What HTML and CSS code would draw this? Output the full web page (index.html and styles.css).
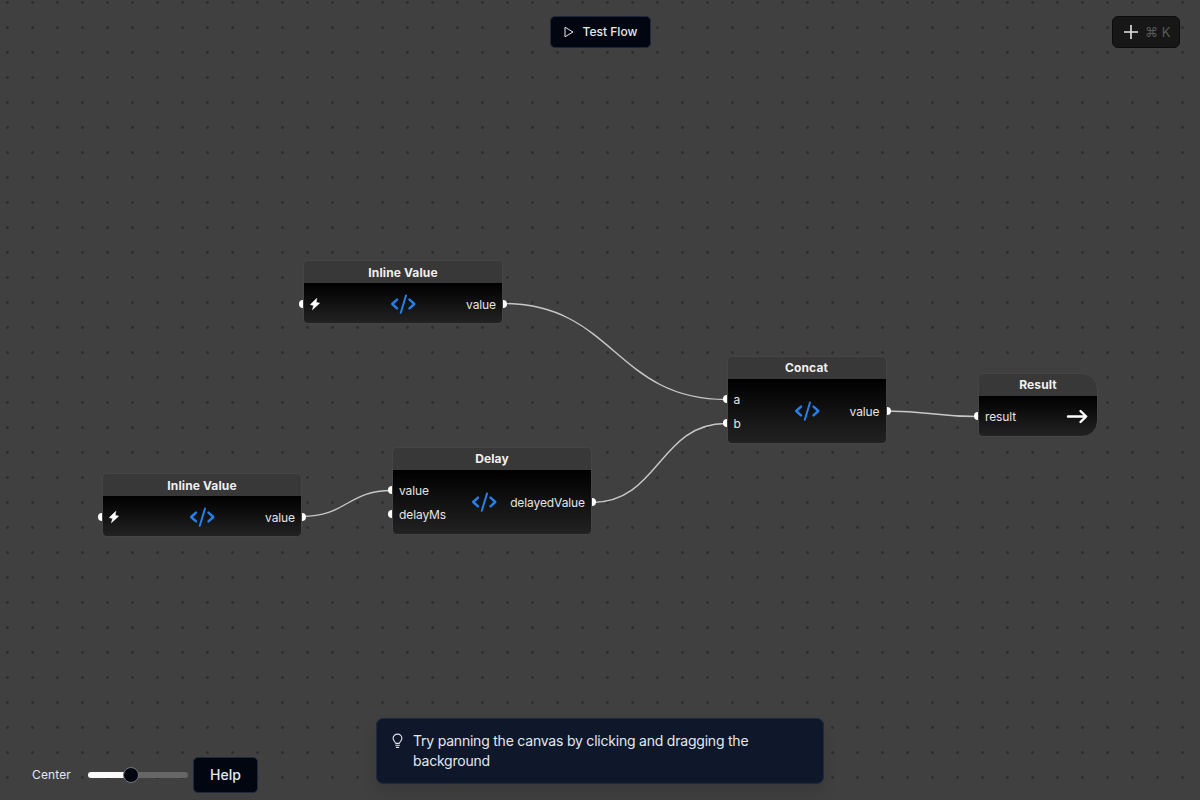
FILE: index.html
```html
<!DOCTYPE html>
<html lang="en">
<head>
<meta charset="utf-8">
<title>Flow editor</title>
<link rel="stylesheet" href="styles.css">
</head>
<body>
<svg class="defs" aria-hidden="true">
  <symbol id="code" viewBox="0 0 26 20"><path d="M7 5.6 2.2 10 7 14.4M19.5 5.6l4.8 4.4-4.8 4.4" stroke-width="2.4"/><path d="M16 1.5 10.8 18.8" stroke-width="2"/></symbol>
  <symbol id="bolt" viewBox="0 0 12 14"><path d="M7.8 1.3 1.3 7.6l3.3 1L3.4 12.8l7.2-6.6-3.4-1z"/></symbol>
</svg>
<main class="canvas">
  <svg class="edges" viewBox="0 0 1200 800">
    <path d="M503 303.5C614 303.5 615 399.5 726 399.5"/>
    <path d="M302 516.5C347 516.5 347 490.5 392 490.5"/>
    <path d="M592 502.5C659 502.5 659 423.5 726 423.5"/>
    <path d="M886 411C932 411 932 416.5 978 416.5"/>
  </svg>

  <section class="node inline-a">
    <h2 class="title">Inline Value</h2>
    <div class="body">
      <div class="ports"><div class="port in"><svg class="bolt"><use href="#bolt"/></svg></div></div>
      <svg class="code"><use href="#code"/></svg>
      <div class="ports"><div class="port out">value</div></div>
    </div>
  </section>
  <section class="node inline-b">
    <h2 class="title">Inline Value</h2>
    <div class="body">
      <div class="ports"><div class="port in"><svg class="bolt"><use href="#bolt"/></svg></div></div>
      <svg class="code"><use href="#code"/></svg>
      <div class="ports"><div class="port out">value</div></div>
    </div>
  </section>
  <section class="node delay">
    <h2 class="title">Delay</h2>
    <div class="body">
      <div class="ports"><div class="port in">value</div><div class="port in">delayMs</div></div>
      <svg class="code"><use href="#code"/></svg>
      <div class="ports"><div class="port out">delayedValue</div></div>
    </div>
  </section>
  <section class="node concat">
    <h2 class="title">Concat</h2>
    <div class="body">
      <div class="ports"><div class="port in">a</div><div class="port in">b</div></div>
      <svg class="code"><use href="#code"/></svg>
      <div class="ports"><div class="port out">value</div></div>
    </div>
  </section>
  <section class="node result">
    <h2 class="title">Result</h2>
    <div class="body">
      <div class="ports"><div class="port in">result</div></div>
      <svg class="arrow" viewBox="0 0 22 16"><path d="M2 8.5h18M14.5 3 20.2 8.5 14.5 14"/></svg>
    </div>
  </section>

  <button class="btn test"><svg class="play" viewBox="0 0 10 12"><path d="M1 1.2v9.6L9 6z"/></svg>Test Flow</button>
  <button class="add"><svg class="plus" viewBox="0 0 14 14"><path d="M7 0v14M0 7h14"/></svg><span>⌘ K</span></button>

  <div class="controls">
    <span class="label">Center</span>
    <div class="slider"><div class="fill"></div><div class="thumb"></div></div>
    <button class="btn help">Help</button>
  </div>

  <aside class="tip">
    <svg class="bulb" viewBox="0 0 12 16"><path d="M3.9 10.6C3.9 8.8 1.2 8 1.2 5.1a4.8 4.6 0 0 1 9.6 0c0 2.9-2.7 3.7-2.7 5.5M3.9 10.6h4.2M3.5 12.7h5M4.3 14.9h3.4"/></svg>
    <p>Try panning the canvas by clicking and dragging the background</p>
  </aside>
</main>
</body>
</html>
```
FILE: styles.css
```css
* { box-sizing: border-box; }
body { margin: 0; font-family: Inter, "Liberation Sans", sans-serif; }
button { font-family: inherit; margin: 0; padding: 0; }
h2, p { margin: 0; }
.defs { position: absolute; width: 0; height: 0; }
.canvas {
  position: relative; width: 1200px; height: 800px; overflow: hidden;
  background: #404040 radial-gradient(circle at 7.5px 2.5px, #2c2c2c .8px, transparent 2px) 0 0 / 25px 25px;
}
.edges { position: absolute; inset: 0; width: 1200px; height: 800px; fill: none; stroke: #c8c8c8; stroke-width: 1.4; }

.node {
  position: absolute; display: flex; flex-direction: column;
  border: 1px solid #454545; border-radius: 5px; color: #e5e5e5;
  background: linear-gradient(#383838 22px, #000 22px, #222);
}
.title { height: 22px; line-height: 22px; font-size: 12px; font-weight: 700; letter-spacing: .12px; text-align: center; color: #f0f0f0; }
.body { flex: 1; display: grid; grid-template-columns: 1fr auto 1fr; align-items: center; }
.body > :last-child { justify-self: end; }
.port { position: relative; height: 24px; line-height: 26px; font-size: 12px; letter-spacing: -.1px; padding: 0 6px; }
.port::before { content: ""; position: absolute; top: 8px; width: 4px; height: 8px; background: #fff; }
.in::before { left: -5px; border-radius: 4px 0 0 4px; }
.out::before { right: -5px; border-radius: 0 4px 4px 0; }
.code { width: 26px; height: 20px; fill: none; stroke: #2680eb; stroke-linejoin: round; stroke-linecap: round; }
.bolt { display: block; width: 12px; height: 24px; margin-left: -1px; fill: #fff; stroke: #fff; stroke-width: .5; stroke-linejoin: round; }
.arrow { width: 22px; height: 16px; margin-right: 9px; fill: none; stroke: #fff; stroke-width: 2.4; stroke-linecap: round; stroke-linejoin: round; }
.inline-a { left: 303px; top: 260px; width: 200px; height: 64px; }
.inline-a .title, .inline-b .title { line-height: 24px; }
.inline-a .body, .inline-b .body { padding-top: 1px; }
.inline-b { left: 102px; top: 473px; width: 200px; height: 64px; }
.delay { left: 392px; top: 447px; width: 200px; height: 88px; }
.delay .body { display: flex; justify-content: space-between; }
.delay .code { margin-left: 12px; }
.concat { left: 727px; top: 356px; width: 160px; height: 88px; }
.concat .out { padding-right: 6.5px; }
.concat .in { padding-left: 5.5px; }
.concat .title { padding-right: 1px; }
.result { left: 978px; top: 373px; width: 120px; height: 64px; border-radius: 5px 16px 16px 5px; }
.result .body { grid-template-columns: 1fr auto; }

.btn { display: flex; align-items: center; justify-content: center; background: #020610; color: #e2e8f0; border: 1px solid #1e293b; border-radius: 5px; }
.test { position: absolute; left: 550px; top: 16px; width: 101px; height: 32px; gap: 9px; padding-bottom: 1px; font-size: 12px; font-weight: 500; }
.play { width: 10px; height: 12px; fill: none; stroke: #e2e8f0; stroke-linejoin: round; }
.add {
  position: absolute; left: 1112px; top: 16px; width: 68px; height: 32px;
  display: flex; align-items: center; gap: 7px; padding-left: 11px;
  background: #171717; border: 1px solid #0b0b0b; border-radius: 6px; color: #5a5a5a; font-size: 13px;
}
.plus { width: 14px; height: 14px; fill: none; stroke: #e5e5e5; stroke-width: 1.6; }

.controls { position: absolute; left: 32px; top: 757px; height: 36px; display: flex; align-items: center; }
.label { width: 56px; font-size: 12px; letter-spacing: .12px; padding-bottom: 1px; color: #e2e8f0; }
.slider { position: relative; width: 100px; height: 6px; border-radius: 3px; background: #666; }
.fill { width: 43px; height: 6px; border-radius: 3px; background: #fafafa; }
.thumb { position: absolute; left: 35px; top: -5px; width: 16px; height: 16px; border-radius: 50%; background: #020610; border: 1px solid #74777d; }
.help { width: 65px; height: 36px; margin-left: 5px; padding-bottom: 2px; font-size: 14px; font-weight: 500; }

.tip {
  position: absolute; left: 376px; top: 718px; width: 448px; height: 66px;
  display: flex; padding: 12px 14.5px; gap: 10.5px;
  background: #0f172a; border: 1px solid #1e293b; border-radius: 7px;
  box-shadow: 0 8px 14px rgba(0,0,0,.12); color: #e2e8f0;
}
.tip p { width: 370px; font-size: 14px; line-height: 20px; letter-spacing: -.215px; }
.bulb { width: 11px; height: 16px; margin-top: 2px; fill: none; stroke: #e2e8f0; stroke-width: 1.2; flex: none; }
```
